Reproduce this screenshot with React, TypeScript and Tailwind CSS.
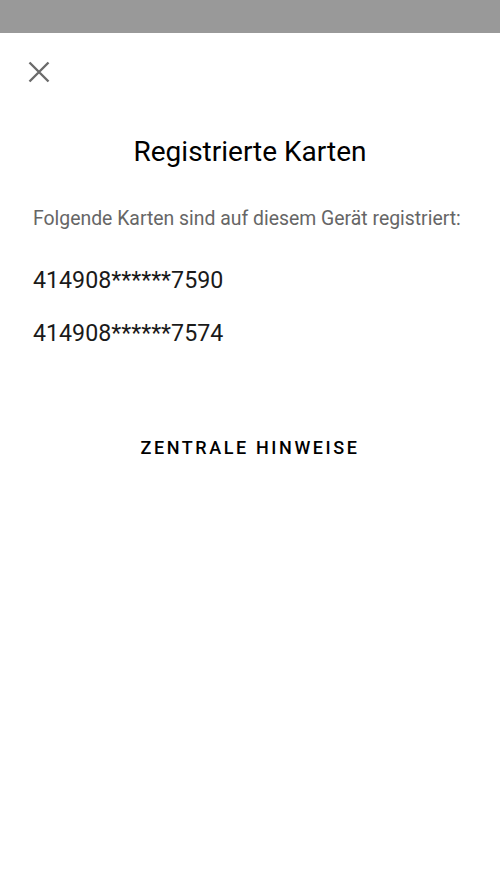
import React from 'react';

const cards = ['414908******7590', '414908******7574'];

const App: React.FC = () => {
  return (
    <div className="w-[500px] h-[889px] bg-white flex flex-col font-['Roboto',sans-serif]">
      {/* Status bar */}
      <div className="h-[33px] bg-[#999999] shrink-0" />

      {/* Close */}
      <div className="px-[24px] pt-[24px]">
        <button className="w-[30px] h-[30px] flex items-center justify-center">
          <svg width="30" height="30" viewBox="0 0 30 30" fill="none">
            <path d="M5.5 5.5L24.5 24.5M24.5 5.5L5.5 24.5" stroke="#6b6b6b" strokeWidth="2.4" />
          </svg>
        </button>
      </div>

      <h1 className="mt-[49px] text-center text-[28px] leading-[32px] text-black">Registrierte Karten</h1>

      <div className="px-[33px] mt-[39px]">
        <p className="text-[19.4px] leading-[24px] text-[#666666]">Folgende Karten sind auf diesem Gerät registriert:</p>
        <div className="mt-[35px] flex flex-col gap-[25px]">
          {cards.map(c => (
            <p key={c} className="text-[23.2px] leading-[28px] text-[#1a1a1a]">{c}</p>
          ))}
        </div>
      </div>

      <div className="mt-[89px] flex justify-center">
        <button className="text-[18px] leading-[24px] font-medium tracking-[2.6px] text-black uppercase">Zentrale Hinweise</button>
      </div>
    </div>
  );
};

export default App;
